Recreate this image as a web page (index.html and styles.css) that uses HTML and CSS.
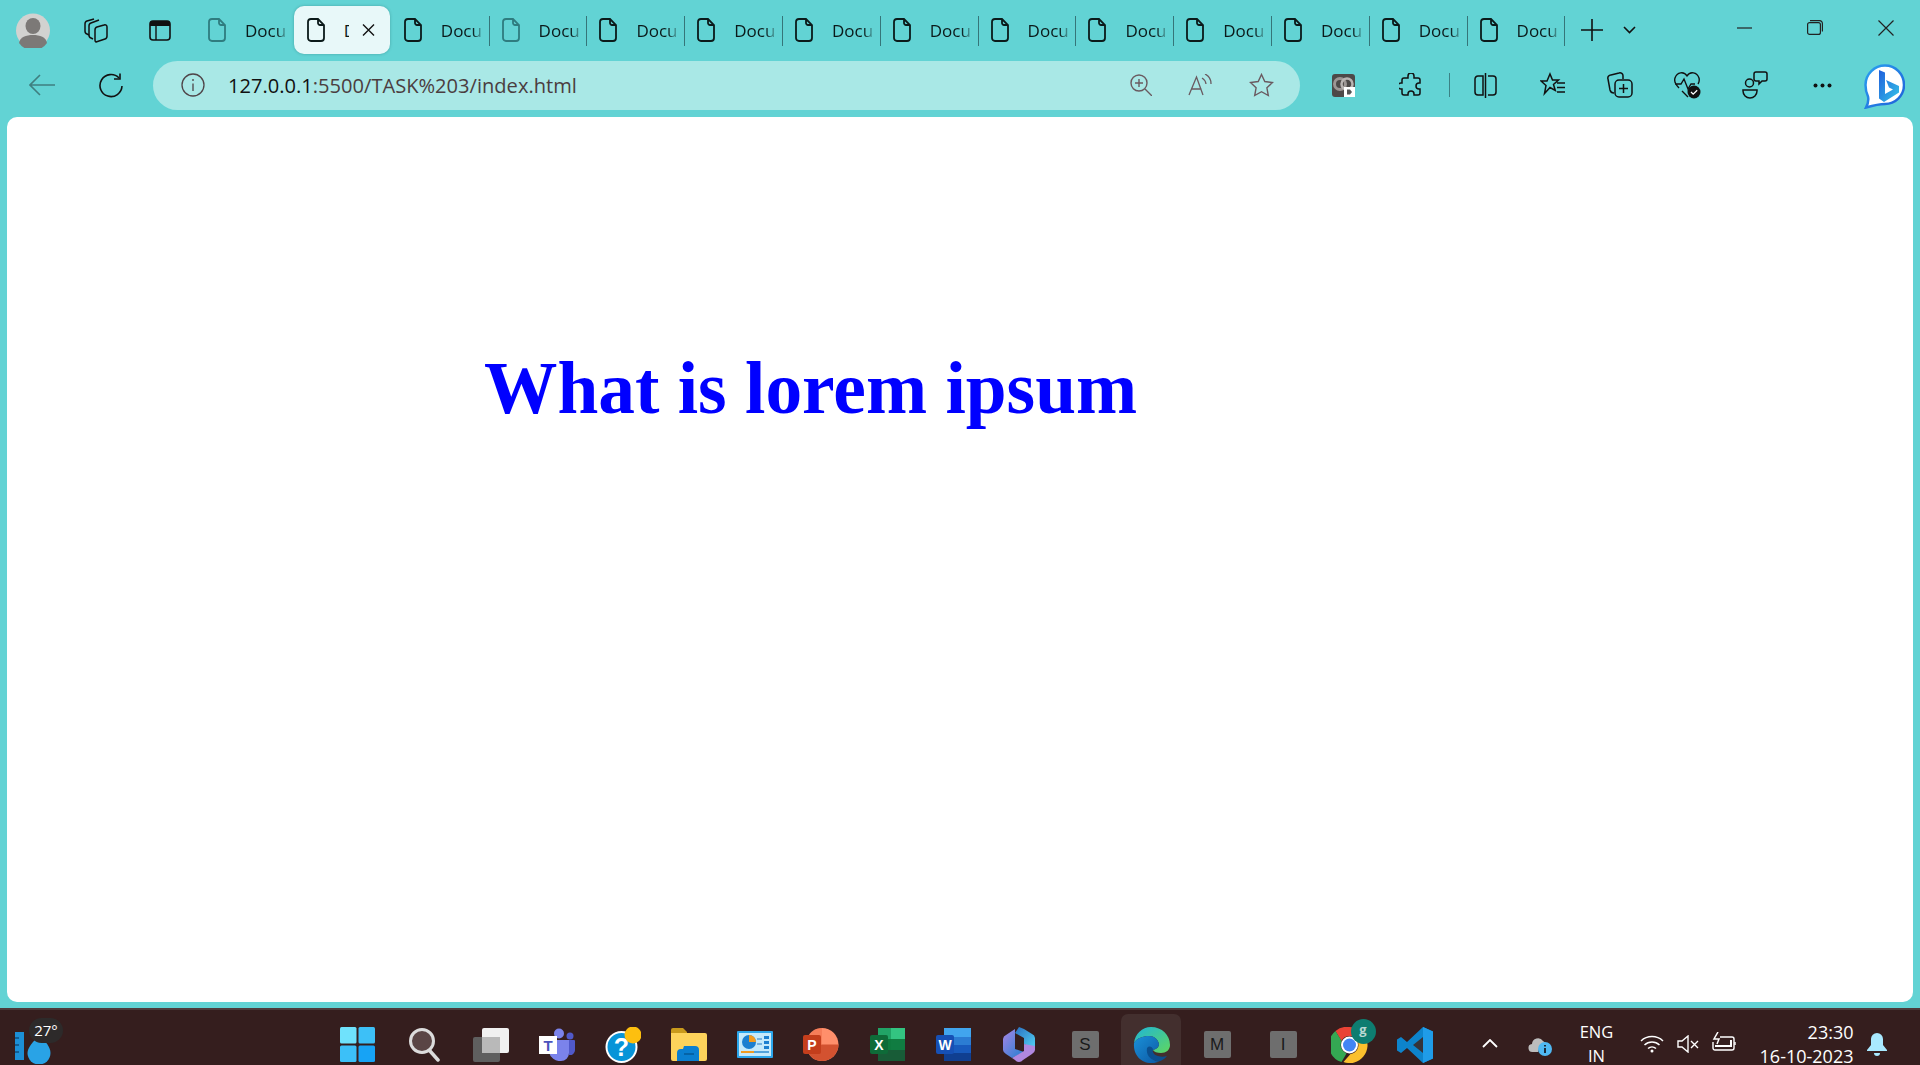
FILE: index.html
```html
<!DOCTYPE html>
<html lang="en">
<head>
  <meta charset="UTF-8">
  <title>What is lorem ipsum</title>
  <link rel="stylesheet" href="styles.css">
</head>
<body>

  <svg class="defs" width="0" height="0">
    <symbol id="doc" viewBox="0 0 18 24">
      <path d="M4 1h7l6 6v13a3 3 0 0 1-3 3H4a3 3 0 0 1-3-3V4a3 3 0 0 1 3-3zM11 1v4a2 2 0 0 0 2 2h4" fill="none" stroke="currentColor" stroke-width="1.8"/>
    </symbol>
  </svg>

  <!-- TABS -->
  <div class="tabstrip">
    <div class="tool-profile">
      <svg width="34" height="35" viewBox="0 0 34 35"><circle cx="17" cy="17.5" r="17" fill="#d2d2d0"/><ellipse cx="17" cy="13" rx="7.5" ry="8" fill="#7c7977"/><path d="M3 30c1-6 7-8 14-8s13 2 14 8a17 17 0 0 1-28 0z" fill="#7c7977"/></svg>
    </div>
    <div class="tool-top">
      <svg width="25" height="25" viewBox="0 0 25 25" fill="none" stroke="#111" stroke-width="1.5"><path d="M12 24l9-3a3 3 0 0 0 2-3V9a2 2 0 0 0-3-2l-7 2a3 3 0 0 0-2 3v10a2 2 0 0 0 1 2z"/><path d="M9 21l-2-1a3 3 0 0 1-2-3V8a3 3 0 0 1 2-3l8-3"/><path d="M5 17l-2-1a3 3 0 0 1-2-3V6a3 3 0 0 1 2-3l7-2"/></svg>
    </div>
    <div class="tool-top">
      <svg width="22" height="21" viewBox="0 0 22 21"><rect x="1" y="1" width="20" height="19" rx="3" fill="none" stroke="#111" stroke-width="1.6"/><path d="M1 4a3 3 0 0 1 3-3h14a3 3 0 0 1 3 3v2H1z" fill="#111"/><path d="M7 6v14" stroke="#111" stroke-width="1.4"/></svg>
    </div>

    <div class="tab tab-dim"><svg class="doc"><use href="#doc"/></svg><span class="tab-title">Docu</span></div>
    <div class="tab tab-active"><svg class="doc"><use href="#doc"/></svg><span class="tab-title">D</span>
      <svg class="tab-close" width="13" height="12" viewBox="0 0 13 12"><path d="M1 .5l11 11M12 .5l-11 11" stroke="#111" stroke-width="1.4"/></svg>
    </div>
    <div class="tab tab-sep"><svg class="doc"><use href="#doc"/></svg><span class="tab-title">Docu</span></div>
    <div class="tab tab-sep tab-dim"><svg class="doc"><use href="#doc"/></svg><span class="tab-title">Docu</span></div>
    <div class="tab tab-sep"><svg class="doc"><use href="#doc"/></svg><span class="tab-title">Docu</span></div>
    <div class="tab tab-sep"><svg class="doc"><use href="#doc"/></svg><span class="tab-title">Docu</span></div>
    <div class="tab tab-sep"><svg class="doc"><use href="#doc"/></svg><span class="tab-title">Docu</span></div>
    <div class="tab tab-sep"><svg class="doc"><use href="#doc"/></svg><span class="tab-title">Docu</span></div>
    <div class="tab tab-sep"><svg class="doc"><use href="#doc"/></svg><span class="tab-title">Docu</span></div>
    <div class="tab tab-sep"><svg class="doc"><use href="#doc"/></svg><span class="tab-title">Docu</span></div>
    <div class="tab tab-sep"><svg class="doc"><use href="#doc"/></svg><span class="tab-title">Docu</span></div>
    <div class="tab tab-sep"><svg class="doc"><use href="#doc"/></svg><span class="tab-title">Docu</span></div>
    <div class="tab tab-sep"><svg class="doc"><use href="#doc"/></svg><span class="tab-title">Docu</span></div>
    <div class="tab tab-sep"><svg class="doc"><use href="#doc"/></svg><span class="tab-title">Docu</span></div>

    <div class="tab-new">
      <svg width="22" height="22" viewBox="0 0 22 22"><path d="M11 0v22M0 11h22" stroke="#111" stroke-width="1.6"/></svg>
    </div>
    <div class="tab-menu">
      <svg width="13" height="8" viewBox="0 0 13 8"><path d="M1 1l5.500 5.500L12 1" fill="none" stroke="#111" stroke-width="1.6"/></svg>
    </div>

    <div class="window-btns">
      <svg width="15" height="2" viewBox="0 0 15 2"><path d="M0 1h15" stroke="#222" stroke-width="1.2"/></svg>
      <svg width="16" height="15" viewBox="0 0 16 15" fill="none" stroke="#222" stroke-width="1.2"><rect x=".6" y="2.600" width="12.800" height="11.800" rx="2"/><path d="M3 .6h9a3 3 0 0 1 3.400 3v8"/></svg>
      <svg width="16" height="16" viewBox="0 0 16 16"><path d="M.5.500l15 15M15.500.500l-15 15" stroke="#222" stroke-width="1.2"/></svg>
    </div>
  </div>

  <!-- TOOLBAR -->
  <div class="toolbar">
    <div class="nav-btn">
      <svg width="26" height="22" viewBox="0 0 26 22"><path d="M11 1L1 11l10 10M1 11h25" fill="none" stroke="#3f7f80" stroke-width="1.600"/></svg>
    </div>
    <div class="nav-btn">
      <svg width="25" height="25" viewBox="0 0 25 25" fill="none" stroke="#111" stroke-width="1.600"><path d="M21 5a11 11 0 1 0 3 8"/><path d="M22 .5V6h-6"/></svg>
    </div>

    <div class="address">
      <svg class="addr-info" width="24" height="24" viewBox="0 0 24 24" fill="none" stroke="#4f4448" stroke-width="1.300"><circle cx="12" cy="12" r="11"/><path d="M12 10.500V18M12 6v2"/></svg>
      <div class="url"><span class="url-host">127.0.0.1</span>:5500/TASK%203/index.html</div>
      <svg class="addr-icon" width="22" height="22" viewBox="0 0 22 22" fill="none" stroke="#6a5a60" stroke-width="1.400"><circle cx="9" cy="9" r="8"/><path d="M15 15l7 7M9 5v8M5 9h8"/></svg>
      <svg class="addr-icon" width="25" height="22" viewBox="0 0 25 22" fill="none" stroke="#6a5a60" stroke-width="1.300"><path d="M1 21L8.500 3 15 21M3.500 15h10"/><path d="M14 4a8 8 0 0 1 4 6M17 0a11 11 0 0 1 6 10"/></svg>
      <svg class="addr-icon" width="25" height="24" viewBox="0 0 25 24" fill="none" stroke="#6a5a60" stroke-width="1.400"><path d="M12.500 1.500l3.300 7 7.700 1-5.600 5.300 1.400 7.700-6.800-3.800-6.800 3.800 1.400-7.700L1.500 9.500l7.700-1z"/></svg>
    </div>

    <div class="tool tool-first">
      <svg width="23" height="23" viewBox="0 0 23 23"><rect width="23" height="23" rx="3" fill="#4d4948"/><circle cx="8" cy="10" r="5.500" fill="none" stroke="#9c9694" stroke-width="3"/><circle cx="15" cy="10" r="5.500" fill="none" stroke="#b9b4b2" stroke-width="2.500"/><rect x="12" y="13" width="11" height="10" fill="#fff"/><path d="M15 15.500h3l2 2.500-2 2.500h-3z" fill="#555"/></svg>
    </div>
    <div class="tool">
      <svg width="24" height="24" viewBox="0 0 24 24"><path d="M9 3a3 3 0 0 1 6 0v2h4a2 2 0 0 1 2 2v3h-1a3 3 0 0 0 0 6h1v4a2 2 0 0 1-2 2h-4v-1a3 3 0 0 0-6 0v1H5a2 2 0 0 1-2-2v-4H2a3 3 0 0 1 0-6h1V7a2 2 0 0 1 2-2h4z" fill="none" stroke="#111" stroke-width="1.500"/></svg>
    </div>
    <div class="tool-divider"></div>
    <div class="tool">
      <svg width="23" height="25" viewBox="0 0 23 25" fill="none" stroke="#111" stroke-width="1.500"><path d="M9 3H4a3 3 0 0 0-3 3v13a3 3 0 0 0 3 3h5zM14 3h5a3 3 0 0 1 3 3v13a3 3 0 0 1-3 3h-5M11.500 0v25"/></svg>
    </div>
    <div class="tool">
      <svg width="26" height="26" viewBox="0 0 26 26" fill="none" stroke="#111" stroke-width="1.500"><path d="M10 2l2.500 6h6l-5 4.500 1.800 6L10 15.500l-5.500 6 1.500-8L1 9h6zM17 11h8M17 15.500h8M17 20h8"/></svg>
    </div>
    <div class="tool">
      <svg width="26" height="26" viewBox="0 0 26 26" fill="none" stroke="#111" stroke-width="1.500"><path d="M7 21a4 4 0 0 1-4-3L1 7a3 3 0 0 1 3-4l8-2a3 3 0 0 1 4 3v3"/><rect x="8" y="8" width="17" height="17" rx="4"/><path d="M16.500 12v9M12 16.500h9"/></svg>
    </div>
    <div class="tool">
      <svg width="27" height="28" viewBox="0 0 27 28"><path d="M5 17C1 13 0 10 1 7c2-6 9-7 12-2 3-5 10-4 12 2 .5 2 .3 4-1 6M1 13h6l3-5 4 10 3-5h4M8 20l6 6" fill="none" stroke="#111" stroke-width="1.400"/><circle cx="20" cy="21" r="6.500" fill="#111"/><path d="M17 21l2.200 2.200 4-4" fill="none" stroke="#fff" stroke-width="1.300"/></svg>
    </div>
    <div class="tool">
      <svg width="26" height="28" viewBox="0 0 26 28" fill="none" stroke="#111" stroke-width="1.500"><circle cx="7.500" cy="12" r="4"/><path d="M1 19h14v1a7 7 0 0 1-14 0zM14 1h9a2 2 0 0 1 2 2v5a2 2 0 0 1-2 2h-3l-3 3v-3h-3a2 2 0 0 1-2-2V3a2 2 0 0 1 2-2z"/></svg>
    </div>
    <div class="tool">
      <svg width="19" height="5" viewBox="0 0 19 5" fill="#111"><circle cx="2.500" cy="2.500" r="2"/><circle cx="9.500" cy="2.500" r="2"/><circle cx="16.500" cy="2.500" r="2"/></svg>
    </div>
    <div class="bing">
      <svg width="41" height="45" viewBox="0 0 41 45"><defs><linearGradient id="bingMark" x1="0" y1="0" x2="1" y2="1"><stop offset="0" stop-color="#1f5fdc"/><stop offset="1" stop-color="#35c4e8"/></linearGradient><linearGradient id="bingEdge" x1="0" y1="0" x2="1" y2="1"><stop offset="0" stop-color="#2aa0f0"/><stop offset="1" stop-color="#1f5fd8"/></linearGradient></defs><path d="M21 1.500c10.500 0 19 8.500 19 19.500 0 11-9 19-19 19-6 0-12 1.500-19 3.500 2-4 3-7 2-11-1.500-3-2.500-7-2.500-11.500C1.500 10 10.500 1.500 21 1.500z" fill="#fff" stroke="url(#bingEdge)" stroke-width="2.500"/><path d="M15 6l6 2.500V30l8-4.500-4-2-3-7.500 13 6v6.500L20 38l-5-3.500z" fill="url(#bingMark)"/></svg>
    </div>
  </div>

  <!-- PAGE -->
  <div class="viewport">
    <h1 class="title">What is lorem ipsum</h1>
  </div>

  <!-- TASKBAR -->
  <div class="taskbar">
    <div class="weather">
      <svg width="38" height="32" viewBox="0 0 38 32"><rect x="0" y="0" width="9" height="28" fill="#1c8fd6"/><path d="M0 6h4M0 13h4M0 20h4" stroke="#0c4f80" stroke-width="1.500"/><path d="M24.500 3c7 7 11 13 11 18a11 11 0 0 1-23 0c0-5 5-11 12-18z" fill="#29a3e6"/></svg>
      <div class="temp">27°</div>
    </div>

    <div class="apps">
      <div class="slot slot-start">
        <svg width="35" height="35" viewBox="0 0 35 35"><rect width="16.500" height="16.500" rx="1.500" fill="#6fe2fc"/><rect x="18.500" width="16.500" height="16.500" rx="1.500" fill="#3dc0f7"/><rect y="18.500" width="16.500" height="16.500" rx="1.500" fill="#3cc0f8"/><rect x="18.500" y="18.500" width="16.500" height="16.500" rx="1.500" fill="#17a3f5"/></svg>
      </div>
      <div class="slot">
        <svg width="32" height="34" viewBox="0 0 32 34"><circle cx="13" cy="13" r="11.500" fill="#5a4545" stroke="#dcdcdc" stroke-width="3"/><path d="M21 23l8 9" stroke="#dcdcdc" stroke-width="3.500" stroke-linecap="round"/></svg>
      </div>
      <div class="slot">
        <svg width="36" height="34" viewBox="0 0 36 34"><rect x="0" y="9" width="27" height="25" rx="2" fill="#5f5f5f"/><rect x="9" y="0" width="27" height="25" rx="2" fill="#f1f1f1"/><rect x="9" y="9" width="18" height="16" fill="#b9b9b9"/></svg>
      </div>
      <div class="slot">
        <svg width="36" height="33" viewBox="0 0 36 33"><circle cx="20" cy="5.500" r="5" fill="#7b83eb"/><circle cx="31" cy="8" r="3.500" fill="#5059c9"/><path d="M28 12h7a1 1 0 0 1 1 1v9a5 5 0 0 1-6 5z" fill="#5059c9"/><path d="M10 12h20v13a8 8 0 0 1-8 8 11 11 0 0 1-12-9z" fill="#7b83eb"/><rect y="8" width="18" height="18" fill="#fff"/><text class="app-letter" x="9" y="22.500" fill="#4b53bc" font-size="15" text-anchor="middle">T</text></svg>
      </div>
      <div class="slot">
        <svg width="36" height="36" viewBox="0 0 36 36"><circle cx="16.500" cy="20" r="15" fill="#0794d8" stroke="#fff" stroke-width="2"/><text class="app-letter" x="16.500" y="29" fill="#fff" font-size="25" text-anchor="middle">?</text><circle cx="28" cy="8" r="8.500" fill="#fdbf0f"/></svg>
      </div>
      <div class="slot">
        <svg width="36" height="33" viewBox="0 0 36 33"><path d="M0 2a2 2 0 0 1 2-2h10l4 4v4H0z" fill="#c99a1c"/><path d="M0 5h34a2 2 0 0 1 2 2v24a2 2 0 0 1-2 2H2a2 2 0 0 1-2-2z" fill="#fdd35b"/><path d="M6 33v-8a4 4 0 0 1 4-4h2l1-3h11a4 4 0 0 1 4 4v11z" fill="#0a7fd0"/><path d="M13 26h10" stroke="#055a99" stroke-width="1.500"/></svg>
      </div>
      <div class="slot">
        <svg width="36" height="27" viewBox="0 0 36 27"><rect width="36" height="27" rx="1" fill="#2ba6ec"/><rect x="2" y="2" width="32" height="23" fill="#c5e9fb"/><circle cx="12" cy="11" r="7" fill="#1c7fd0"/><path d="M12 11V4a7 7 0 0 1 7 7z" fill="#f29b1f"/><path d="M20 8h5M20 13h5" stroke="#5aa0d8" stroke-width="1.500"/><rect x="27" y="5" width="5" height="3" fill="#1c7fd0"/><rect x="27" y="10" width="5" height="3" fill="#1c7fd0"/><rect x="27" y="15" width="5" height="3" fill="#1c7fd0"/><path d="M4 21h28" stroke="#2b8ad0" stroke-width="1.500"/><path d="M4 21h13" stroke="#f29b1f" stroke-width="2"/></svg>
      </div>
      <div class="slot">
        <svg width="36" height="33" viewBox="0 0 36 33"><path d="M19 0a16.500 16.500 0 0 1 0 33C12 33 7 29 5 24V9c2-5 7-9 14-9z" fill="#ff8f6b"/><path d="M19 16.500h16.500A16.500 16.500 0 0 1 19 33c-7 0-12-4-14-9v-7.500z" fill="#d35230"/><path d="M5 9c2-5 7-9 14-9v16.500H5z" fill="#ed6c47" opacity=".5"/><rect y="7" width="18" height="19" rx="2" fill="#c43e1c"/><text class="app-letter" x="9" y="22" fill="#fff" font-size="14" text-anchor="middle">P</text></svg>
      </div>
      <div class="slot">
        <svg width="35" height="33" viewBox="0 0 35 33"><rect x="8" width="27" height="33" rx="2" fill="#107c41"/><rect x="21" width="14" height="11" fill="#33c481"/><rect x="8" width="13" height="11" fill="#21a366"/><rect x="21" y="11" width="14" height="11" fill="#107c41"/><rect x="8" y="11" width="13" height="11" fill="#0e7a3e"/><rect x="8" y="22" width="27" height="11" fill="#185c37"/><rect y="7" width="18" height="19" rx="2" fill="#0e6b38"/><text class="app-letter" x="9" y="22" fill="#fff" font-size="14" text-anchor="middle">X</text></svg>
      </div>
      <div class="slot">
        <svg width="35" height="33" viewBox="0 0 35 33"><rect x="8" width="27" height="33" rx="2" fill="#185abd"/><rect x="8" width="27" height="9" fill="#41a5ee"/><rect x="8" y="9" width="27" height="8" fill="#2b7cd3"/><rect x="8" y="25" width="27" height="8" fill="#103f91"/><rect y="7" width="18" height="19" rx="2" fill="#1650b5"/><text class="app-letter" x="9" y="22" fill="#fff" font-size="14" text-anchor="middle">W</text></svg>
      </div>
      <div class="slot">
        <svg width="32" height="35" viewBox="0 0 32 35"><defs><linearGradient id="m365a" x1="0" y1="0" x2="1" y2="1"><stop offset="0" stop-color="#a985e6"/><stop offset="1" stop-color="#1f7fd0"/></linearGradient><linearGradient id="m365b" x1="0" y1="0" x2="1" y2="1"><stop offset="0" stop-color="#2a6fc0"/><stop offset="1" stop-color="#52d3f5"/></linearGradient></defs><path d="M16 0l5 2 8 5a5 5 0 0 1 3 5v10l-11-5v-6l-9-5z" fill="url(#m365b)"/><path d="M12 2L3 8a5 5 0 0 0-3 4v11a5 5 0 0 0 3 4l6 4 12-6-9-3V8z" fill="url(#m365a)"/><path d="M21 17l11 2v3a5 5 0 0 1-3 5l-9 6a5 5 0 0 1-8 0l-3-2 12-7z" fill="#b088df"/></svg>
      </div>
      <div class="slot"><div class="tile">S</div></div>
      <div class="slot slot-active">
        <svg width="37" height="36" viewBox="0 0 37 36"><defs><linearGradient id="edgeA" x1="0" y1="0" x2="1" y2="1"><stop offset="0" stop-color="#1fb5d8"/><stop offset="1" stop-color="#5fd75f"/></linearGradient><linearGradient id="edgeB" x1="0" y1="0" x2="1" y2="1"><stop offset="0" stop-color="#1a90d8"/><stop offset="1" stop-color="#0c59a4"/></linearGradient></defs><path d="M1 16C2 7 9 0 18 0c11 0 19 8 19 18 0 5-4 8-9 8-4 0-7-1-8-3 4-1 6-3 6-6-1-5-5-8-10-8C10 9 4 11 1 16z" fill="url(#edgeA)"/><path d="M1 16c3-5 9-7 15-7 5 0 9 3 10 8 0 3-2 5-6 6-6 2-3 8 3 11 4 1 5 1 2 1-3 1-5 1-7 1C8 36 0 28 1 16z" fill="url(#edgeB)"/><path d="M14 21c-1 6 2 11 9 13 4 1 8-1 11-5-3 1-6 1-9 0-4-1-6-4-5-7-2-3-4-3-6-1z" fill="#0b4f8f"/></svg>
      </div>
      <div class="slot"><div class="tile">M</div></div>
      <div class="slot"><div class="tile">I</div></div>
      <div class="slot">
        <div class="chrome">
          <svg width="37" height="36" viewBox="0 0 36 36"><path d="M18 0a18 18 0 0 1 15.600 9H18a9 9 0 0 0-8 5L4 4a18 18 0 0 1 14-4z" fill="#ea4335"/><path d="M4 4l6.200 10A9 9 0 0 0 15 26.500L10 35A18 18 0 0 1 4 4z" fill="#34a853"/><path d="M33.600 9A18 18 0 0 1 12 35l7-8a9 9 0 0 0 7-13z" fill="#fbc02d"/><circle cx="18" cy="18" r="8.500" fill="#fff"/><circle cx="18" cy="18" r="6.500" fill="#4285f4"/></svg>
          <div class="chrome-badge">g</div>
        </div>
      </div>
      <div class="slot">
        <svg width="36" height="36" viewBox="0 0 36 36"><path d="M26 0l10 4.500v27L26 36 10 21l-6 5-4-2.500V12.500L4 10l6 5z" fill="#0d84cc"/><path d="M26 0l10 4.500v27L26 36z" fill="#1f9ce8"/><path d="M26 10v16l-10-8z" fill="#35343a"/></svg>
      </div>
    </div>

    <div class="tray">
      <div class="tray-item tray-chevron">
        <svg width="16" height="9" viewBox="0 0 16 9"><path d="M1 8l7-7 7 7" fill="none" stroke="#fff" stroke-width="1.800"/></svg>
      </div>
      <div class="tray-item tray-cloud">
        <svg width="24" height="20" viewBox="0 0 24 20"><path d="M5 16a4 4 0 0 1-1-8 6 6 0 0 1 11-3 5 5 0 0 1 3 4H12l-2 7z" fill="#bdbdbd"/><circle cx="17" cy="13" r="7" fill="#4fb8f2"/><path d="M17 12v5M17 9v1.500" stroke="#1c2b3a" stroke-width="2"/></svg>
      </div>
      <div class="lang">ENG<br>IN</div>
      <div class="tray-item tray-wifi">
        <svg width="24" height="18" viewBox="0 0 24 18" fill="none" stroke="#fff" stroke-width="1.500"><path d="M1 6a16 16 0 0 1 22 0M4.500 10a11 11 0 0 1 15 0M8 13.500a6 6 0 0 1 8 0"/><circle cx="12" cy="16" r="1.500" fill="#fff" stroke="none"/></svg>
      </div>
      <div class="tray-item tray-sound">
        <svg width="22" height="18" viewBox="0 0 22 18" fill="none" stroke="#fff" stroke-width="1.400"><path d="M1 6h4l6-5v16l-6-5H1zM14 6l7 7M21 6l-7 7"/></svg>
      </div>
      <div class="tray-item tray-battery">
        <svg width="24" height="20" viewBox="0 0 24 20" fill="none" stroke="#fff" stroke-width="1.400"><path d="M8 5h12a2 2 0 0 1 2 2v9a2 2 0 0 1-2 2H3a2 2 0 0 1-2-2v-6"/><path d="M3 14h16V8" stroke-width="2"/><path d="M6 0L2 7h5l-2 5" stroke-width="1.500"/><path d="M23 10v3"/></svg>
      </div>
      <div class="clock">23:30<br>16-10-2023</div>
      <div class="tray-item tray-bell">
        <svg width="20" height="23" viewBox="0 0 20 23" fill="#a9e9ff"><path d="M10 0a6 6 0 0 1 6 6v6l4 5v1H0v-1l4-5V6a6 6 0 0 1 6-6z"/><path d="M7 20h6a3 3 0 0 1-6 0z"/></svg>
      </div>
    </div>
  </div>

</body>
</html>
```

FILE: styles.css
```css
* {
  box-sizing: border-box;
}
html, body {
  margin: 0;
  height: 100%;
}
body {
  height: 1065px;
  overflow: hidden;
  display: flex;
  flex-direction: column;
  background: #62d3d4;
  font-family: "Open Sans", "Noto Sans", sans-serif;
  color: #111;
}
.defs {
  position: absolute;
}

/* tabs */
.tabstrip {
  display: flex;
  align-items: center;
  height: 60px;
  flex: none;
}
.tool-profile {
  width: 64px;
  padding-left: 16px;
  display: flex;
}
.tool-top {
  width: 64px;
  height: 30px;
  display: flex;
  align-items: center;
  justify-content: center;
}
.tool-top + .tool-top {
  margin-right: 4px;
}
.tab {
  position: relative;
  flex: none;
  width: 97.8px;
  height: 48px;
  padding-left: 12px;
  display: flex;
  align-items: center;
  gap: 19px;
  color: #0b1a1a;
}
.doc {
  width: 18px;
  height: 24px;
  flex: none;
}
.tab-dim .doc {
  color: #2f7c7f;
}
.tab-title {
  width: 42px;
  overflow: hidden;
  white-space: nowrap;
  font-size: 17px;
  -webkit-mask-image: linear-gradient(to right, #000 75%, rgba(0, 0, 0, 0.15));
  mask-image: linear-gradient(to right, #000 75%, rgba(0, 0, 0, 0.15));
}
.tab-sep::after {
  content: "";
  position: absolute;
  right: 0;
  top: 10px;
  height: 30px;
  width: 1px;
  background: #357579;
}
.tab-active {
  background: #e8f8f9;
  border-radius: 10px;
  width: 96px;
  margin-right: 2px;
  padding-left: 13px;
  box-shadow: 0 0 3px rgba(20, 80, 80, 0.35);
}
.tab-active .tab-title {
  width: 5px;
  -webkit-mask-image: none;
  mask-image: none;
}
.tab-close {
  margin-left: -6px;
}
.tab-new {
  width: 22px;
  margin-left: 16px;
  display: flex;
}
.tab-menu {
  margin-left: 20px;
  display: flex;
}
.window-btns {
  margin-left: auto;
  padding-right: 26px;
  padding-bottom: 5px;
  display: flex;
  align-items: center;
  gap: 55px;
}

/* toolbar */
.toolbar {
  display: flex;
  align-items: center;
  height: 57px;
  flex: none;
  padding-bottom: 7px;
  padding-left: 9px;
}
.nav-btn {
  width: 66px;
  display: flex;
  justify-content: center;
  margin-right: 2px;
}
.nav-btn + .nav-btn {
  margin-right: 10px;
}
.address {
  flex: none;
  width: 1147px;
  height: 49px;
  border-radius: 25px;
  background: #a9e8e6;
  display: flex;
  align-items: center;
  padding-left: 28px;
  padding-right: 26px;
}
.url {
  margin-left: 23px;
  flex: 1;
  font-size: 20.1px;
  white-space: nowrap;
  color: #4b3d40;
}
.url-host {
  color: #111;
}
.addr-icon {
  margin-left: 36px;
}
.tool {
  width: 67.4px;
  display: flex;
  justify-content: center;
  align-items: center;
  flex: none;
}
.tool-first {
  margin-left: 10px;
}
.tool-divider {
  width: 1px;
  height: 24px;
  background: #3b8285;
  margin-right: 2px;
  margin-left: 4px;
}
.bing {
  margin-left: 8px;
  padding-top: 3px;
  display: flex;
}

/* page */
.viewport {
  flex: 1;
  margin: 0 7px;
  background: #fff;
  border-radius: 10px;
  padding: 230px 0 0 477px;
  min-height: 0;
}
.title {
  margin: 0;
  font-family: "Liberation Serif", serif;
  font-size: 73.4px;
  font-weight: bold;
  color: #0000ff;
}

/* taskbar */
.taskbar {
  flex: none;
  height: 57px;
  margin-top: 6px;
  padding-top: 4px;
  border-top: 2px solid #4d3b3b;
  background: #351e1e;
  display: flex;
  overflow: hidden;
  color: #fff;
}
.weather {
  position: relative;
  width: 324px;
  padding: 18px 0 0 15px;
  flex: none;
}
.temp {
  position: absolute;
  left: 29px;
  top: 4px;
  width: 34px;
  height: 25px;
  border-radius: 13px;
  background: #2d2a2a;
  text-align: center;
  font-size: 15px;
  line-height: 24px;
}
.apps {
  display: flex;
  flex: none;
}
.slot {
  width: 66px;
  height: 51px;
  padding-top: 10px;
  display: flex;
  align-items: center;
  justify-content: center;
}
.slot-start {
  margin-right: 2px;
}
.slot-active {
  background: #432f2e;
  border-radius: 7px 7px 0 0;
  margin: 0 3px;
  width: 60px;
}
.app-letter {
  font-family: "Liberation Sans", sans-serif;
  font-weight: bold;
}
.tile {
  width: 27px;
  height: 27px;
  border-radius: 2px;
  background: #6e6e6e;
  color: #1a1a1a;
  font-family: "Liberation Sans", sans-serif;
  font-size: 17px;
  text-align: center;
  line-height: 27px;
}
.chrome {
  position: relative;
  display: flex;
}
.chrome-badge {
  position: absolute;
  right: -8px;
  top: -8px;
  width: 25px;
  height: 25px;
  border-radius: 50%;
  background: #0e7d70;
  color: #b9d8d2;
  font-size: 13px;
  font-weight: bold;
  text-align: center;
  line-height: 20px;
}
.tray {
  flex: 1;
  display: flex;
  align-items: flex-start;
  padding-top: 6px;
}
.tray-item {
  display: flex;
  justify-content: center;
  flex: none;
}
.tray-chevron {
  width: 16px;
  margin: 19px 0 0 34px;
}
.tray-cloud {
  width: 24px;
  margin: 16px 0 0 29.5px;
}
.lang {
  width: 50px;
  margin-left: 20px;
  text-align: center;
  font-size: 16.5px;
  line-height: 24px;
}
.tray-wifi {
  width: 24px;
  margin: 15px 0 0 18px;
}
.tray-sound {
  width: 22px;
  margin: 15px 0 0 13px;
}
.tray-battery {
  width: 24px;
  margin: 12px 0 0 13px;
}
.clock {
  width: 118px;
  text-align: right;
  font-size: 18px;
  line-height: 24px;
}
.tray-bell {
  width: 20px;
  margin: 13px 0 0 13px;
}
```
